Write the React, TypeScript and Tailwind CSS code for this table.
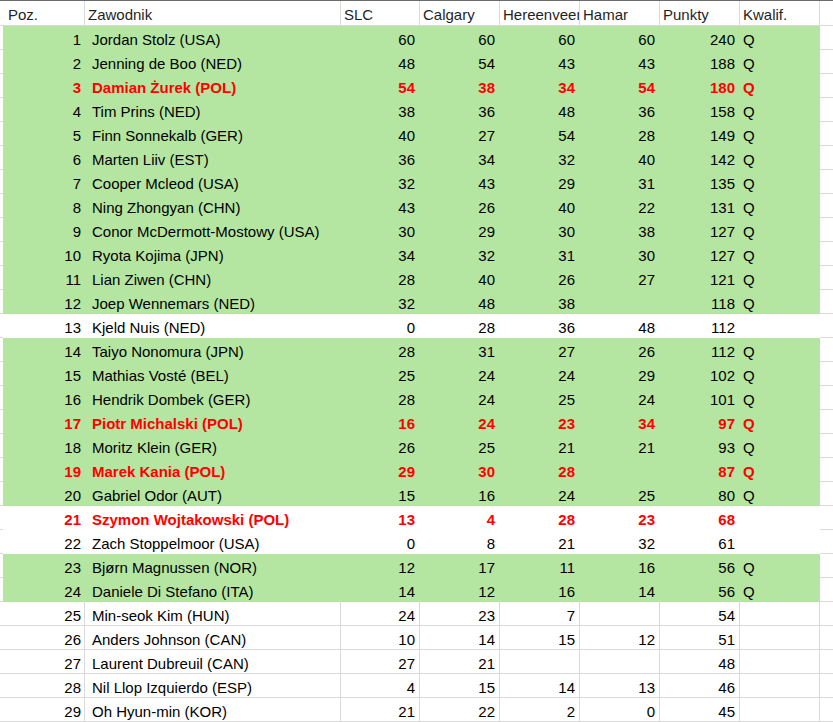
import React from "react";

type Row = {
  pos: number;
  name: string;
  scores: (number | null)[];
  total: number;
  q: boolean;
  fill: "green" | "white" | "none";
  red?: boolean;
};

const rows: Row[] = [
  { pos: 1, name: "Jordan Stolz (USA)", scores: [60, 60, 60, 60], total: 240, q: true, fill: "green" },
  { pos: 2, name: "Jenning de Boo (NED)", scores: [48, 54, 43, 43], total: 188, q: true, fill: "green" },
  { pos: 3, name: "Damian Żurek (POL)", scores: [54, 38, 34, 54], total: 180, q: true, fill: "green", red: true },
  { pos: 4, name: "Tim Prins (NED)", scores: [38, 36, 48, 36], total: 158, q: true, fill: "green" },
  { pos: 5, name: "Finn Sonnekalb (GER)", scores: [40, 27, 54, 28], total: 149, q: true, fill: "green" },
  { pos: 6, name: "Marten Liiv (EST)", scores: [36, 34, 32, 40], total: 142, q: true, fill: "green" },
  { pos: 7, name: "Cooper Mcleod (USA)", scores: [32, 43, 29, 31], total: 135, q: true, fill: "green" },
  { pos: 8, name: "Ning Zhongyan (CHN)", scores: [43, 26, 40, 22], total: 131, q: true, fill: "green" },
  { pos: 9, name: "Conor McDermott-Mostowy (USA)", scores: [30, 29, 30, 38], total: 127, q: true, fill: "green" },
  { pos: 10, name: "Ryota Kojima (JPN)", scores: [34, 32, 31, 30], total: 127, q: true, fill: "green" },
  { pos: 11, name: "Lian Ziwen (CHN)", scores: [28, 40, 26, 27], total: 121, q: true, fill: "green" },
  { pos: 12, name: "Joep Wennemars (NED)", scores: [32, 48, 38, null], total: 118, q: true, fill: "green" },
  { pos: 13, name: "Kjeld Nuis (NED)", scores: [0, 28, 36, 48], total: 112, q: false, fill: "white" },
  { pos: 14, name: "Taiyo Nonomura (JPN)", scores: [28, 31, 27, 26], total: 112, q: true, fill: "green" },
  { pos: 15, name: "Mathias Vosté (BEL)", scores: [25, 24, 24, 29], total: 102, q: true, fill: "green" },
  { pos: 16, name: "Hendrik Dombek (GER)", scores: [28, 24, 25, 24], total: 101, q: true, fill: "green" },
  { pos: 17, name: "Piotr Michalski (POL)", scores: [16, 24, 23, 34], total: 97, q: true, fill: "green", red: true },
  { pos: 18, name: "Moritz Klein (GER)", scores: [26, 25, 21, 21], total: 93, q: true, fill: "green" },
  { pos: 19, name: "Marek Kania (POL)", scores: [29, 30, 28, null], total: 87, q: true, fill: "green", red: true },
  { pos: 20, name: "Gabriel Odor (AUT)", scores: [15, 16, 24, 25], total: 80, q: true, fill: "green" },
  { pos: 21, name: "Szymon Wojtakowski (POL)", scores: [13, 4, 28, 23], total: 68, q: false, fill: "white", red: true },
  { pos: 22, name: "Zach Stoppelmoor (USA)", scores: [0, 8, 21, 32], total: 61, q: false, fill: "white" },
  { pos: 23, name: "Bjørn Magnussen (NOR)", scores: [12, 17, 11, 16], total: 56, q: true, fill: "green" },
  { pos: 24, name: "Daniele Di Stefano (ITA)", scores: [14, 12, 16, 14], total: 56, q: true, fill: "green" },
  { pos: 25, name: "Min-seok Kim (HUN)", scores: [24, 23, 7, null], total: 54, q: false, fill: "none" },
  { pos: 26, name: "Anders Johnson (CAN)", scores: [10, 14, 15, 12], total: 51, q: false, fill: "none" },
  { pos: 27, name: "Laurent Dubreuil (CAN)", scores: [27, 21, null, null], total: 48, q: false, fill: "none" },
  { pos: 28, name: "Nil Llop Izquierdo (ESP)", scores: [4, 15, 14, 13], total: 46, q: false, fill: "none" },
  { pos: 29, name: "Oh Hyun-min (KOR)", scores: [21, 22, 2, 0], total: 45, q: false, fill: "none" },
];

// cell look per fill: fill hides gridlines like in the sheet
const fillCls = {
  green: "bg-[#b4e6a2] border-[#b4e6a2]",
  white: "bg-white border-white",
  none: "bg-white border-[#dadada]",
};

const numWidths = ["w-[79px]", "w-[80px]", "w-[80px]", "w-[80px]"];

function DataRow({ row }: { row: Row }) {
  const f = fillCls[row.fill];
  const txt = row.red ? "text-[#ff0000] font-bold" : "text-black";
  const cell = `h-[24px] border-r border-b ${f} flex items-end pb-[2px] overflow-hidden whitespace-nowrap shrink-0`;

  return (
    <div className={`flex ${txt}`}>
      <div className="w-[3px] h-[24px] border-b border-[#dadada] shrink-0" />
      <div className={`${cell} w-[82px] justify-end pr-[3px]`}>{row.pos}</div>
      <div className={`${cell} w-[256px] pl-[7px]`}>{row.name}</div>
      {row.scores.map((s, i) => (
        <div key={i} className={`${cell} ${numWidths[i]} justify-end pr-[4px]`}>
          {s === null ? "" : s}
        </div>
      ))}
      <div className={`${cell} w-[80px] justify-end pr-[4px]`}>{row.total}</div>
      <div className={`${cell} w-[80px] pl-[3px]`}>{row.q ? "Q" : ""}</div>
      <div className="flex-1 h-[24px] border-b border-[#dadada]" />
    </div>
  );
}

export default function App() {
  const head = "h-[25px] border-r border-b border-[#dadada] flex items-end pb-[3px] overflow-hidden whitespace-nowrap shrink-0 pl-[3px]";

  return (
    <div
      className="w-[833px] h-[722px] overflow-hidden bg-white text-[15px] leading-none text-black"
      style={{ fontFamily: '"Liberation Sans", Arial, sans-serif' }}
    >
      <div className="border-t border-[#6b6b6b]">
        <div className="flex text-[#1f1f1f]">
          <div className="w-[3px] h-[25px] border-b border-[#dadada] shrink-0" />
          <div className={`${head} w-[82px] !pl-[5px]`}>Poz.</div>
          <div className={`${head} w-[256px]`}>Zawodnik</div>
          <div className={`${head} w-[79px]`}>SLC</div>
          <div className={`${head} w-[80px]`}>Calgary</div>
          <div className={`${head} w-[80px]`}>Hereenveen</div>
          <div className={`${head} w-[80px]`}>Hamar</div>
          <div className={`${head} w-[80px]`}>Punkty</div>
          <div className={`${head} w-[80px]`}>Kwalif.</div>
          <div className="flex-1 h-[25px] border-b border-[#dadada]" />
        </div>
        {rows.map((r) => (
          <DataRow key={r.pos} row={r} />
        ))}
      </div>
    </div>
  );
}
